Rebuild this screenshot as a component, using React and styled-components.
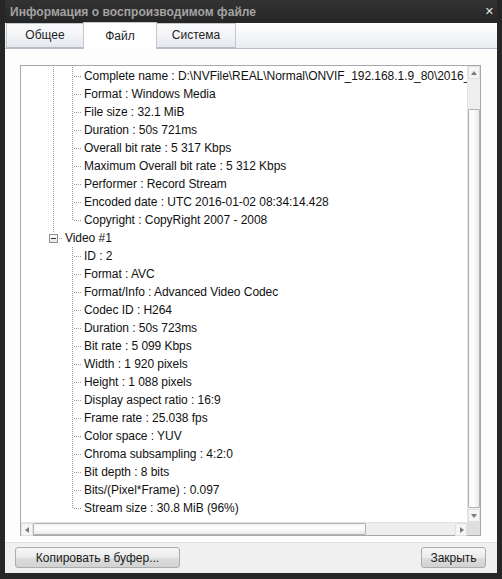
import styled, { createGlobalStyle } from 'styled-components'

const GlobalStyle = createGlobalStyle`
  html, body {
    margin: 0;
    padding: 0;
    background: #262626;
  }
  * { box-sizing: border-box; }
`

const general = [
  'Complete name : D:\\NVFile\\REAL\\Normal\\ONVIF_192.168.1.9_80\\2016_01',
  'Format : Windows Media',
  'File size : 32.1 MiB',
  'Duration : 50s 721ms',
  'Overall bit rate : 5 317 Kbps',
  'Maximum Overall bit rate : 5 312 Kbps',
  'Performer : Record Stream',
  'Encoded date : UTC 2016-01-02 08:34:14.428',
  'Copyright : CopyRight 2007 - 2008',
]

const video = [
  'ID : 2',
  'Format : AVC',
  'Format/Info : Advanced Video Codec',
  'Codec ID : H264',
  'Duration : 50s 723ms',
  'Bit rate : 5 099 Kbps',
  'Width : 1 920 pixels',
  'Height : 1 088 pixels',
  'Display aspect ratio : 16:9',
  'Frame rate : 25.038 fps',
  'Color space : YUV',
  'Chroma subsampling : 4:2:0',
  'Bit depth : 8 bits',
  'Bits/(Pixel*Frame) : 0.097',
  'Stream size : 30.8 MiB (96%)',
]

const Arrow = ({ dir }) => {
  const pts = {
    up: '1,5 4,1 7,5',
    down: '1,1 4,5 7,1',
    left: '5,1 1,4 5,7',
    right: '2,1 6,4 2,7',
  }[dir]
  const vertical = dir === 'up' || dir === 'down'
  return (
    <svg width={vertical ? 8 : 6} height={vertical ? 6 : 8} viewBox={vertical ? '0 0 8 6' : '0 0 6 8'}>
      <polygon points={pts} fill="#7a7a7a" />
    </svg>
  )
}

const App = () => {
  return (
    <>
      <GlobalStyle />
      <Window>
        <TitleBar>
          <Title>Информация о воспроизводимом файле</Title>
          <CloseX>✕</CloseX>
        </TitleBar>
        <Client>
          <TabStrip>
            <Tab $w={78}>Общее</Tab>
            <Tab $w={74} $active>Файл</Tab>
            <Tab $w={80}>Система</Tab>
          </TabStrip>
          <Panel>
            <TreeBox>
              <TreeView>
                {general.map((t, i) => (
                  <Row key={'g' + i}>
                    <Indent />
                    <Guide $kind="pipe" />
                    <Guide $kind={i === general.length - 1 ? 'elbow' : 'tee'} />
                    <Label>{t}</Label>
                  </Row>
                ))}
                <Row>
                  <Indent />
                  <ExpanderCell>
                    <Expander>
                      <Minus />
                    </Expander>
                  </ExpanderCell>
                  <Label>Video #1</Label>
                </Row>
                {video.map((t, i) => (
                  <Row key={'v' + i}>
                    <Indent />
                    <Guide $kind="none" />
                    <Guide $kind={i === video.length - 1 ? 'elbow' : 'tee'} />
                    <Label>{t}</Label>
                  </Row>
                ))}
              </TreeView>
              <VScroll>
                <ScrollBtn><Arrow dir="up" /></ScrollBtn>
                <Track $size={30} />
                <VThumb />
                <ScrollBtn><Arrow dir="down" /></ScrollBtn>
              </VScroll>
              <HScroll>
                <ScrollBtn><Arrow dir="left" /></ScrollBtn>
                <HThumb />
                <HTrack />
                <ScrollBtn><Arrow dir="right" /></ScrollBtn>
              </HScroll>
              <Corner />
            </TreeBox>
          </Panel>
          <Footer>
            <Button $w={165}>Копировать в буфер...</Button>
            <Button $w={65}>Закрыть</Button>
          </Footer>
        </Client>
      </Window>
    </>
  )
}

export default App

const dotV = 'repeating-linear-gradient(to bottom, #9c9c9c 0 1px, transparent 1px 2px)'
const dotH = 'repeating-linear-gradient(to right, #9c9c9c 0 1px, transparent 1px 2px)'

const guideBg = {
  none: '',
  pipe: `
    background-image: ${dotV};
    background-size: 1px 100%;
    background-position: 9px 0;
  `,
  tee: `
    background-image: ${dotV}, ${dotH};
    background-size: 1px 100%, 8px 1px;
    background-position: 9px 0, 11px 9px;
  `,
  elbow: `
    background-image: ${dotV}, ${dotH};
    background-size: 1px 10px, 8px 1px;
    background-position: 9px 0, 11px 9px;
  `,
}

const Window = styled.div`
  width: 502px;
  height: 579px;
  background: #262626;
  display: flex;
  flex-direction: column;
  padding: 0 5px 6px 5px;
  font-family: "Liberation Sans", Arial, sans-serif;
`

const TitleBar = styled.div`
  height: 23px;
  display: flex;
  align-items: center;
  justify-content: space-between;
  padding: 0 3px 0 5px;
  background: linear-gradient(#333 0%, #262626 100%);
`

const Title = styled.div`
  color: #a3a3a3;
  font-weight: bold;
  font-size: 12px;
  letter-spacing: 0.05px;
`

const CloseX = styled.div`
  color: #e6e6e6;
  font-size: 11px;
  font-weight: bold;
  font-family: "DejaVu Sans", sans-serif;
`

const Client = styled.div`
  flex: 1;
  background: #fdfdfd;
  display: flex;
  flex-direction: column;
`

const TabStrip = styled.div`
  height: 26px;
  display: flex;
  align-items: flex-end;
  padding-left: 1px;
  background: linear-gradient(#ffffff 0%, #f2f4f7 60%, #e8ebf0 100%);
  border-bottom: 1px solid #b6bcc6;
`

const Tab = styled.div`
  width: ${(p) => p.$w}px;
  height: ${(p) => (p.$active ? 27 : 25)}px;
  margin-bottom: ${(p) => (p.$active ? -1 : 0)}px;
  display: flex;
  align-items: center;
  justify-content: center;
  font-size: 12px;
  color: #1e1e1e;
  border: 1px solid #c3c8d0;
  border-bottom: ${(p) => (p.$active ? 'none' : '1px solid #b6bcc6')};
  margin-right: -1px;
  background: ${(p) =>
    p.$active ? '#ffffff' : 'linear-gradient(#fbfbfc 0%, #f1f3f6 55%, #e4e8ee 100%)'};
  padding-bottom: ${(p) => (p.$active ? 0 : 1)}px;
`

const Panel = styled.div`
  padding: 16px 16px 0 15px;
  background: #fdfdfd;
`

const TreeBox = styled.div`
  height: 471px;
  border: 1px solid #a5a9ad;
  background: #fff;
  display: grid;
  grid-template-columns: 1fr 13px;
  grid-template-rows: 1fr 13px;
`

const TreeView = styled.div`
  overflow: hidden;
  display: flex;
  flex-direction: column;
  padding-top: 1px;
`

const Row = styled.div`
  height: 18px;
  display: flex;
  align-items: center;
  flex-shrink: 0;
`

const Indent = styled.span`
  width: 23px;
  height: 18px;
  flex-shrink: 0;
`

const Guide = styled.span`
  width: 19px;
  height: 18px;
  flex-shrink: 0;
  background-repeat: no-repeat;
  ${(p) => guideBg[p.$kind]}
`

const ExpanderCell = styled.span`
  width: 19px;
  height: 18px;
  flex-shrink: 0;
  display: flex;
  align-items: center;
  padding-left: 5px;
  background-image: ${dotV}, ${dotH};
  background-size: 1px 4px, 5px 1px;
  background-position: 9px 0, 15px 9px;
  background-repeat: no-repeat;
`

const Expander = styled.span`
  width: 9px;
  height: 9px;
  border: 1px solid #8f8f8f;
  background: linear-gradient(#ffffff, #e6e6e6);
  display: flex;
  align-items: center;
  justify-content: center;
`

const Minus = styled.span`
  width: 5px;
  height: 1px;
  background: #333;
`

const Label = styled.span`
  font-size: 12px;
  color: #111;
  white-space: nowrap;
  padding-left: 2px;
  line-height: 18px;
  letter-spacing: -0.05px;
`

const VScroll = styled.div`
  display: flex;
  flex-direction: column;
  background: #f0f0f0;
  border-left: 1px solid #e3e3e3;
`

const HScroll = styled.div`
  display: flex;
  background: #f0f0f0;
  border-top: 1px solid #e3e3e3;
`

const Corner = styled.div`
  background: #dedede;
`

const ScrollBtn = styled.div`
  width: 12px;
  height: 13px;
  flex-shrink: 0;
  display: flex;
  align-items: center;
  justify-content: center;
  background: #f5f5f5;
  border: 1px solid #e0e0e0;
`

const Track = styled.div`
  height: ${(p) => p.$size}px;
  flex-shrink: 0;
  background: #eeeeee;
`

const VThumb = styled.div`
  flex: 1;
  margin: 0 0 1px;
  border: 1px solid #b3b3b3;
  border-radius: 1px;
  background: linear-gradient(to right, #f4f4f4 0%, #ffffff 40%, #e9e9e9 100%);
`

const HThumb = styled.div`
  width: 333px;
  flex-shrink: 0;
  border: 1px solid #b3b3b3;
  border-radius: 1px;
  background: linear-gradient(#f4f4f4 0%, #ffffff 40%, #e9e9e9 100%);
`

const HTrack = styled.div`
  flex: 1;
  background: #eeeeee;
`

const Footer = styled.div`
  margin-top: 6px;
  flex: 1;
  display: flex;
  align-items: center;
  justify-content: space-between;
  padding: 0 11px 1px 10px;
  background: #f0f0f0;
  border-top: 1px solid #dfdfdf;
`

const Button = styled.div`
  width: ${(p) => p.$w}px;
  height: 21px;
  display: flex;
  align-items: center;
  justify-content: center;
  font-size: 12px;
  color: #1a1a1a;
  border: 1px solid #acacac;
  border-radius: 3px;
  background: linear-gradient(#f6f6f6 0%, #ebebeb 50%, #dddddd 51%, #d2d2d2 100%);
`
